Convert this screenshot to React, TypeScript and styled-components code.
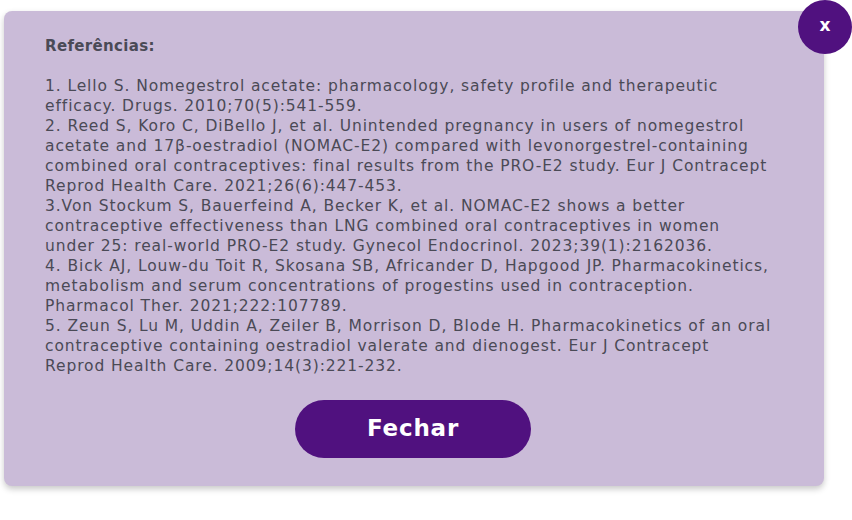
import React from "react";
import styled, { createGlobalStyle } from "styled-components";

const Global = createGlobalStyle`
  html, body { margin: 0; padding: 0; background: #ffffff; }
  body { font-family: "DejaVu Sans", "Open Sans", sans-serif; }
`;

const Stage = styled.div`
  position: relative;
  width: 852px;
  height: 520px;
  padding: 11px 0 0 4px;
  box-sizing: border-box;
`;

const Card = styled.div`
  width: 820px;
  height: 475px;
  box-sizing: border-box;
  background: #cabbd8;
  border-radius: 8px;
  box-shadow: 0 3px 6px rgba(0, 0, 0, 0.22);
  padding: 25px 41px 28px 41px;
  display: flex;
  flex-direction: column;
  align-items: flex-start;
`;

const Heading = styled.h2`
  margin: 0 0 20px 0;
  font-size: 15px;
  line-height: 20px;
  font-weight: 700;
  letter-spacing: 0.35px;
  color: #4a4a56;
`;

const RefList = styled.div`
  display: flex;
  flex-direction: column;
`;

const Line = styled.span`
  display: block;
  font-size: 15.5px;
  line-height: 20px;
  letter-spacing: 0.9px;
  color: #4a4a56;
  white-space: nowrap;
`;

const Footer = styled.div`
  align-self: stretch;
  display: flex;
  justify-content: center;
  margin-top: 24px;
  padding-right: 2px;
`;

const CloseButton = styled.button`
  width: 236px;
  height: 58px;
  border: none;
  border-radius: 29px;
  background: #50117f;
  color: #ffffff;
  font-family: "DejaVu Sans", sans-serif;
  font-weight: 700;
  font-size: 23px;
  letter-spacing: 0.8px;
  padding: 0 0 3px 0;
  cursor: pointer;
`;

const CornerClose = styled.button`
  position: absolute;
  top: 0;
  left: 798px;
  width: 54px;
  height: 54px;
  border-radius: 50%;
  border: none;
  background: #50117f;
  color: #ffffff;
  font-family: "DejaVu Sans", sans-serif;
  font-weight: 700;
  font-size: 17px;
  line-height: 1;
  padding: 0 0 3px 0;
  cursor: pointer;
`;

const lines = [
  "1. Lello S. Nomegestrol acetate: pharmacology, safety profile and therapeutic",
  "efficacy. Drugs. 2010;70(5):541-559.",
  "2. Reed S, Koro C, DiBello J, et al. Unintended pregnancy in users of nomegestrol",
  "acetate and 17β-oestradiol (NOMAC-E2) compared with levonorgestrel-containing",
  "combined oral contraceptives: final results from the PRO-E2 study. Eur J Contracept",
  "Reprod Health Care. 2021;26(6):447-453.",
  "3.Von Stockum S, Bauerfeind A, Becker K, et al. NOMAC-E2 shows a better",
  "contraceptive effectiveness than LNG combined oral contraceptives in women",
  "under 25: real-world PRO-E2 study. Gynecol Endocrinol. 2023;39(1):2162036.",
  "4. Bick AJ, Louw-du Toit R, Skosana SB, Africander D, Hapgood JP. Pharmacokinetics,",
  "metabolism and serum concentrations of progestins used in contraception.",
  "Pharmacol Ther. 2021;222:107789.",
  "5. Zeun S, Lu M, Uddin A, Zeiler B, Morrison D, Blode H. Pharmacokinetics of an oral",
  "contraceptive containing oestradiol valerate and dienogest. Eur J Contracept",
  "Reprod Health Care. 2009;14(3):221-232.",
];

export default function App() {
  return (
    <>
      <Global />
      <Stage>
        <Card>
          <Heading>Referências:</Heading>
          <RefList>
            {lines.map((l, i) => (
              <Line key={i}>{l}</Line>
            ))}
          </RefList>
          <Footer>
            <CloseButton>Fechar</CloseButton>
          </Footer>
        </Card>
        <CornerClose aria-label="Fechar">x</CornerClose>
      </Stage>
    </>
  );
}
